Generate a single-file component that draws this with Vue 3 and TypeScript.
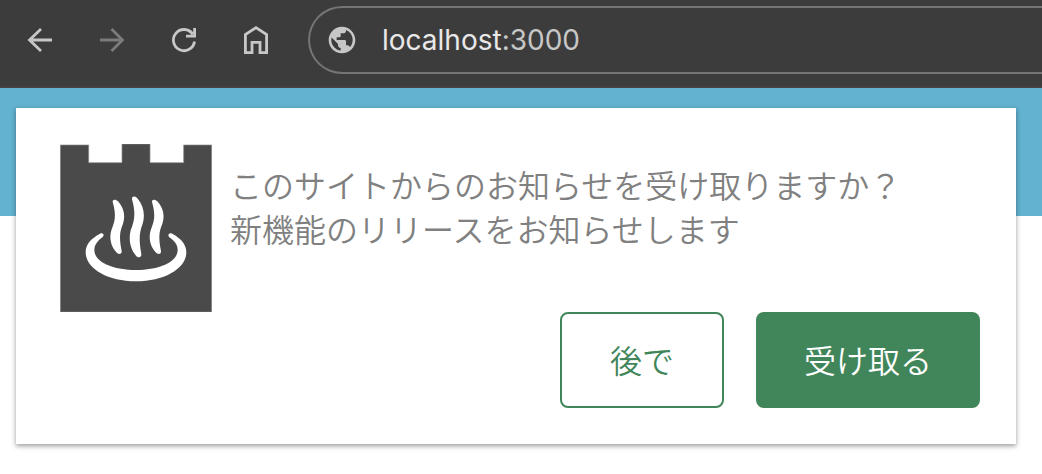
<script setup lang="ts">
import { ref } from 'vue'

const address = ref('localhost:3000')
const visible = ref(true)

function dismiss(): void {
  visible.value = false
}
</script>

<template>
  <div class="page">
    <header class="toolbar">
      <nav class="nav" aria-label="Browser">
        <button type="button" class="tool" aria-label="Back">
          <svg viewBox="0 0 32 32"><path d="M28 16H6M17 5 5.500 16 17 27" /></svg>
        </button>
        <button type="button" class="tool disabled" aria-label="Forward">
          <svg viewBox="0 0 32 32"><path d="M4 16H26M15.500 5 26.500 16 15.500 27" /></svg>
        </button>
        <button type="button" class="tool" aria-label="Reload">
          <svg viewBox="0 0 32 32"><path d="M26.500 17.500A10.600 10.600 0 1 1 24.800 10.200M26.600 4V12.200H18" /></svg>
        </button>
        <button type="button" class="tool" aria-label="Home">
          <svg viewBox="0 0 32 32"><path d="M5.400 28.600V10.600L16 3.700 26.600 10.600V28.600H20V18.400H12V28.600Z" /></svg>
        </button>
      </nav>
      <a class="omnibox" href="#">
        <svg class="globe" viewBox="0 0 24 24" aria-hidden="true">
          <path d="M12 2C6.480 2 2 6.480 2 12s4.480 10 10 10 10-4.480 10-10S17.520 2 12 2zm-1 17.930c-3.950-.49-7-3.850-7-7.930 0-.62.08-1.210.21-1.790L9 15v1c0 1.100.9 2 2 2v1.930zm6.900-2.540c-.26-.81-1-1.390-1.900-1.390h-1v-3c0-.55-.45-1-1-1H8v-2h2c.55 0 1-.45 1-1V7h2c1.100 0 2-.9 2-2v-.41c2.930 1.190 5 4.060 5 7.410 0 2.080-.8 3.970-2.100 5.390z" />
        </svg>
        <span class="address">{{ address.split(':')[0] }}<span class="port">:{{ address.split(':')[1] }}</span></span>
      </a>
    </header>

    <main class="site">
      <div class="banner"></div>
      <section v-if="visible" class="prompt" role="dialog" aria-labelledby="prompt-text">
        <div class="content">
          <svg class="logo" viewBox="30 27 456 504" aria-hidden="true">
            <path class="wall" d="M31 30H116V83H216V27H300V83H401V30H485V531H31Z" />
            <g class="steam">
              <path d="M188 201C187 193 197 191 204 199C222 219 227 243 219 266C209 290 207 307 215 348C216 358 206 360 199 352C183 335 177 310 184 286C193 262 201 245 188 201Z" />
              <path d="M246 193C245 183 255 182 262 190C281 212 286 240 278 266C268 293 266 313 274 357C275 368 265 370 258 362C241 343 235 314 242 286C252 260 259 239 246 193Z" />
              <path d="M306 201C305 193 315 191 322 199C340 219 345 243 337 266C327 290 325 307 333 348C334 358 324 360 317 352C301 335 295 310 302 286C311 262 319 245 306 201Z" />
              <path d="M150 296C120 312 107 330 107 352C107 400 172 439 258 439C344 439 409 400 409 352C409 330 396 312 367 296C358 291 351 300 358 307C375 319 383 330 383 345C383 380 330 405 258 405C186 405 133 380 133 345C133 330 143 317 158 306C165 299 158 291 150 296Z" />
            </g>
          </svg>
          <p id="prompt-text" class="message">このサイトからのお知らせを受け取りますか？<br />新機能のリリースをお知らせします</p>
        </div>
        <div class="actions">
          <button type="button" class="btn later" @click="dismiss">後で</button>
          <button type="button" class="btn accept" @click="dismiss">受け取る</button>
        </div>
      </section>
    </main>
  </div>
</template>

<style>
body {
  margin: 0;
  background: #fff;
}
</style>

<style scoped>
.page {
  min-height: 100vh;
  overflow: hidden;
  font-family: "Noto Sans CJK JP", sans-serif;
}

.toolbar {
  display: flex;
  align-items: center;
  gap: 36px;
  box-sizing: border-box;
  height: 88px;
  padding: 0 0 6px 24px;
  background: #3c3c3c;
  border-bottom: 2px solid #474343;
}

.nav {
  display: flex;
  gap: 40px;
}

.tool {
  width: 32px;
  height: 32px;
  padding: 0;
  border: 0;
  background: none;
  color: #c7c7c7;
}

.tool svg {
  display: block;
  width: 32px;
  height: 32px;
  fill: none;
  stroke: currentColor;
  stroke-width: 2.8;
}

.tool.disabled {
  color: #7b7b7b;
}

.omnibox {
  display: flex;
  flex: 1;
  align-items: center;
  gap: 24px;
  box-sizing: border-box;
  height: 68px;
  padding-left: 16px;
  border: 2px solid #757575;
  border-right: 0;
  border-radius: 34px 0 0 34px;
  color: #e8e8e8;
  text-decoration: none;
}

.globe {
  width: 32px;
  height: 32px;
  fill: #c7c7c7;
}

.address {
  font: 28px/40px Inter, sans-serif;
}

.port {
  color: #c7c7c7;
}

.site {
  position: relative;
}

.banner {
  height: 128px;
  background: #62b2d0;
}

.prompt {
  position: absolute;
  top: 20px;
  right: 26px;
  left: 16px;
  padding: 36px 36px 36px 44px;
  background: #fff;
  box-shadow: 0 2px 5px rgba(0, 0, 0, 0.4);
}

.content {
  display: flex;
  gap: 18px;
}

.logo {
  flex: none;
  width: 152px;
  height: 168px;
}

.wall {
  fill: #4a4a4a;
  stroke: #8a8a8a;
  stroke-width: 2;
}

.steam {
  fill: #fff;
}

.message {
  margin: 18px 0 0;
  color: #808080;
  font-size: 32px;
  font-weight: 350;
  line-height: 44px;
}

.actions {
  display: flex;
  justify-content: flex-end;
  gap: 32px;
}

.btn {
  height: 96px;
  padding: 0 48px 2px;
  border: 0;
  border-radius: 8px;
  font-family: inherit;
  font-size: 32px;
  font-weight: 350;
  line-height: 44px;
}

.later {
  border: 2px solid #41865a;
  background: #fff;
  color: #41865a;
}

.accept {
  background: #41865a;
  color: #fff;
}
</style>
